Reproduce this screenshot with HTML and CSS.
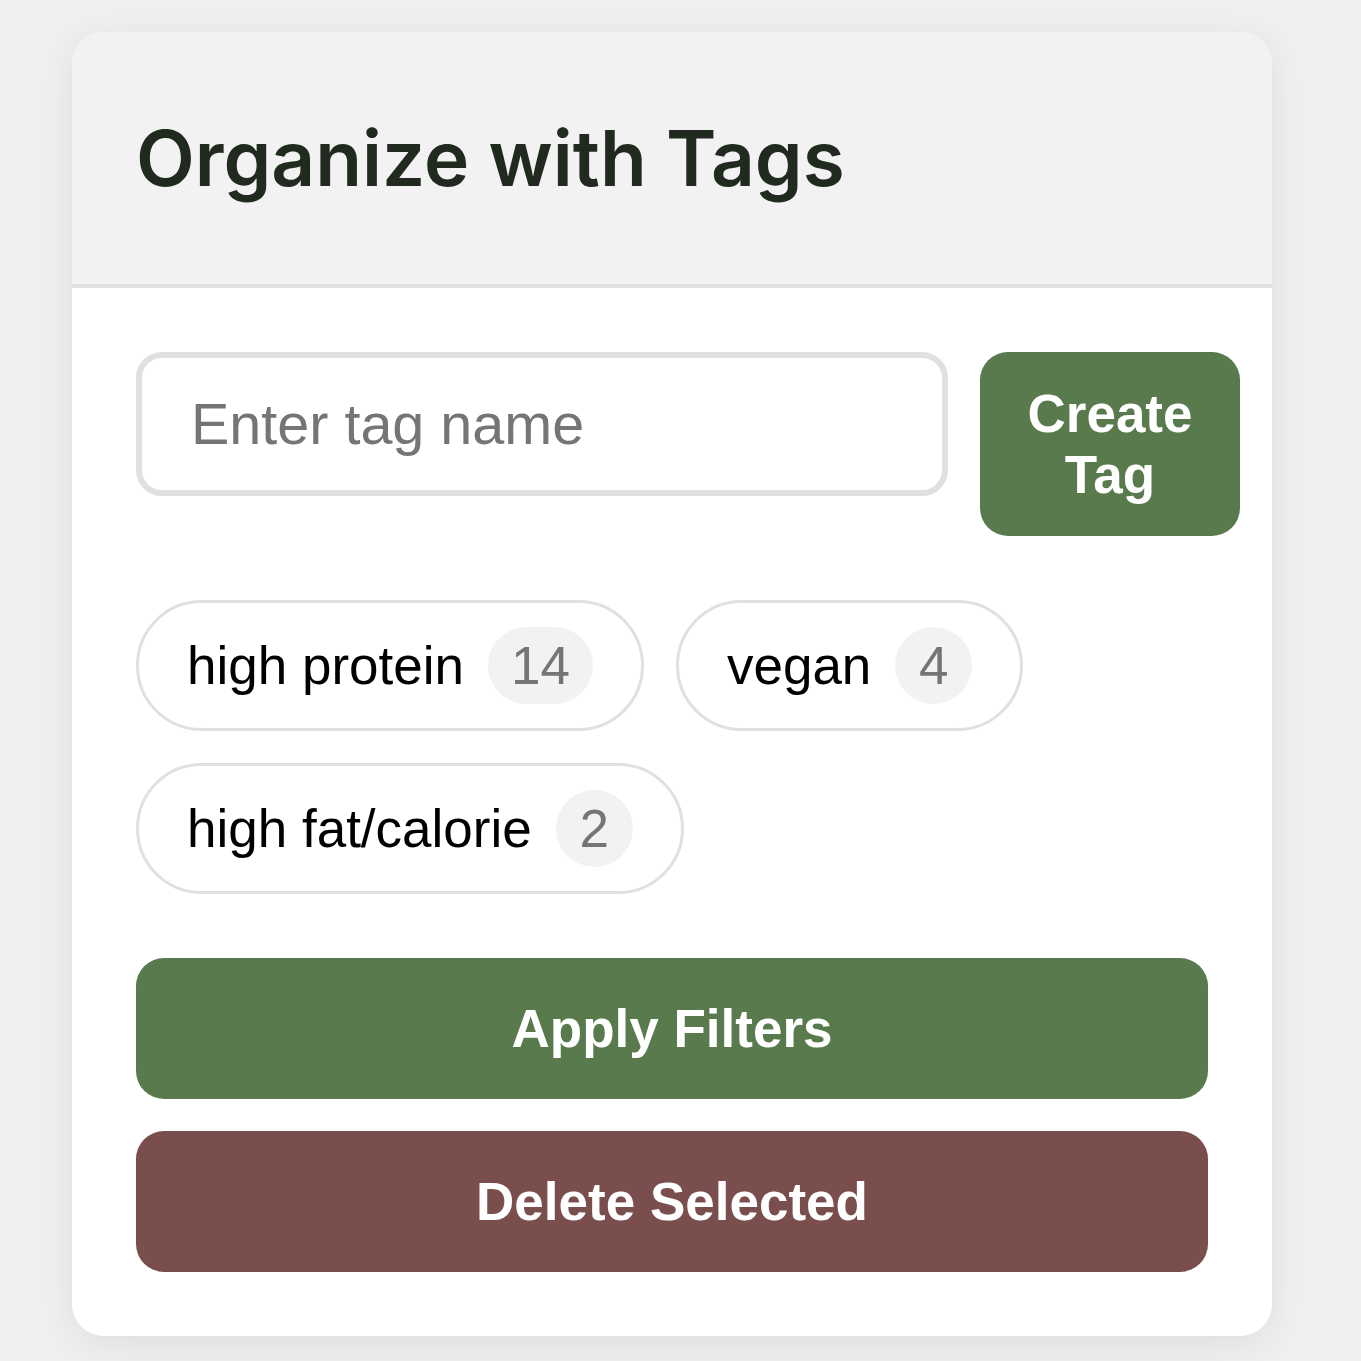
FILE: index.html
```html
<!DOCTYPE html>
<html lang="en">
<head>
<meta charset="utf-8">
<title>Organize with Tags</title>
<link rel="stylesheet" href="styles.css">
</head>
<body>
  <section class="card">
    <header class="card-header">
      <h1 class="title">Organize with Tags</h1>
    </header>
    <div class="card-body">
      <div class="create-row">
        <input class="tag-input" type="text" placeholder="Enter tag name">
        <button class="btn btn-create">Create Tag</button>
      </div>
      <div class="chips">
        <div class="chip"><span class="chip-label">high protein</span><span class="chip-count">14</span></div>
        <div class="chip"><span class="chip-label">vegan</span><span class="chip-count">4</span></div>
        <div class="chip"><span class="chip-label">high fat/calorie</span><span class="chip-count">2</span></div>
      </div>
      <div class="actions">
        <button class="btn btn-wide btn-green">Apply Filters</button>
        <button class="btn btn-wide btn-red">Delete Selected</button>
      </div>
    </div>
  </section>
</body>
</html>
```

FILE: styles.css
```css
html, body {
  margin: 0;
  padding: 0;
}
body {
  background: #f0f0f0;
  font-family: "Liberation Sans", Arial, sans-serif;
  padding: 32px 0 0 72px;
  min-height: 1361px;
  box-sizing: border-box;
}
.card {
  width: 1200px;
  background: #ffffff;
  border-radius: 32px;
  overflow: hidden;
  box-shadow: 0 8px 40px rgba(0, 0, 0, 0.08);
}
.card-header {
  background: #f2f2f2;
  border-bottom: 4px solid #e0e0e0;
  padding: 80px 64px;
}
.title {
  margin: 0;
  font-family: Inter, "Liberation Sans", sans-serif;
  font-weight: 600;
  font-size: 76.5px;
  line-height: 92px;
  color: #212a1e;
}
.card-body {
  padding: 64px;
  display: flex;
  flex-direction: column;
}
.create-row {
  display: flex;
  align-items: flex-start;
  gap: 32px;
}
.tag-input {
  flex: 0 0 812px;
  width: 812px;
  height: 144px;
  box-sizing: border-box;
  border: 6px solid #e0e0e0;
  border-radius: 26px;
  padding: 0 40px 0 49px;
  font-family: "Liberation Sans", Arial, sans-serif;
  font-size: 57.5px;
  color: #222;
  background: #fff;
  outline: none;
}
.tag-input::placeholder {
  color: #757575;
}
.btn {
  border: none;
  color: #fff;
  font-family: "Liberation Sans", Arial, sans-serif;
  font-weight: 700;
  font-size: 53px;
  line-height: normal;
  cursor: pointer;
  border-radius: 28px;
}
.btn-create {
  flex: 0 0 260px;
  width: 260px;
  padding: 31px 46px;
  background: #587a4d;
  text-align: center;
}
.chips {
  margin-top: 64px;
  display: flex;
  flex-wrap: wrap;
  gap: 32px;
}
.chip {
  display: inline-flex;
  align-items: center;
  gap: 24px;
  padding: 24px 48px;
  border: 3px solid #e0e0e0;
  border-radius: 999px;
  font-size: 53px;
  color: #000;
  background: #fff;
}
.chip-count {
  display: inline-block;
  box-sizing: border-box;
  padding: 8px 23px;
  min-width: 77px;
  border-radius: 999px;
  background: #f2f2f2;
  color: #757575;
  text-align: center;
}
.actions {
  margin-top: 64px;
  display: flex;
  flex-direction: column;
  gap: 32px;
}
.btn-wide {
  width: 100%;
  padding: 40px 0;
}
.btn-green {
  background: #587a4d;
}
.btn-red {
  background: #7a4e4d;
}
```
